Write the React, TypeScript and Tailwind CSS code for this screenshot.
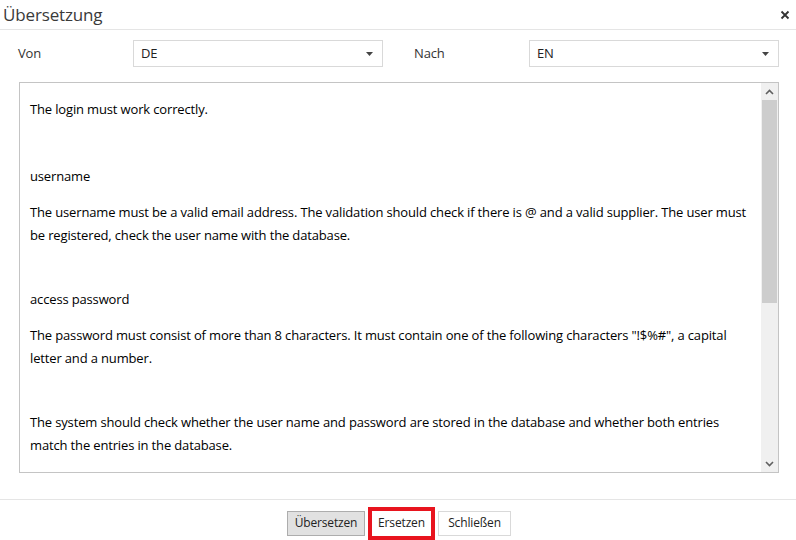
import React from "react";

function Select({ value }: { value: string }) {
  return (
    <div className="flex h-[27px] w-[250px] items-center justify-between border border-[#d9d9d9] bg-white pl-[7px] pr-[9px] text-[13px] text-[#222]">
      <span>{value}</span>
      <svg width="7" height="4" viewBox="0 0 7 4">
        <path d="M0 0h7L3.5 4z" fill="#444" />
      </svg>
    </div>
  );
}

export default function App() {
  return (
    <div
      className="flex h-[540px] w-[796px] flex-col bg-white text-[#222] tracking-[-0.15px]"
      style={{ fontFamily: '"Open Sans", "Noto Sans", sans-serif' }}
    >
      <div className="flex h-[30px] items-center justify-between border-b border-[#e5e5e5] pl-[3px] pr-[6px]">
        <span className="text-[17px] text-[#3a3a3a]">Übersetzung</span>
        <svg width="10" height="10" viewBox="0 0 10 10">
          <path d="M1.5 1.5L8.5 8.5M8.5 1.5L1.5 8.5" stroke="#333" strokeWidth="1.8" />
        </svg>
      </div>

      <div className="mt-[10px] flex items-center">
        <span className="ml-[18px] w-[115px] text-[13px] text-[#333]">Von</span>
        <Select value="DE" />
        <span className="ml-[31px] w-[115px] text-[13px] text-[#333]">Nach</span>
        <Select value="EN" />
      </div>

      <div className="ml-[19px] mt-[15px] flex h-[391px] w-[760px] border border-[#c4c4c4]">
        <div className="flex-1 pl-[10px] pr-[10px] pt-[15px] text-[13px] leading-[23px] text-black">
          <p>The login must work correctly.</p>
          <p className="mt-[44px]">username</p>
          <p className="mt-[13px]">
            The username must be a valid email address. The validation should check if there is @ and a valid supplier. The user must be registered, check the user name with the database.
          </p>
          <p className="mt-[41px]">access password</p>
          <p className="mt-[13px]">
            The password must consist of more than 8 characters. It must contain one of the following characters "!$%#", a capital letter and a number.
          </p>
          <p className="mt-[41px]">
            The system should check whether the user name and password are stored in the database and whether both entries match the entries in the database.
          </p>
        </div>
        <div className="flex w-[17px] flex-col bg-[#f0f0f0]">
          <div className="flex h-[17px] items-center justify-center">
            <svg width="9" height="6" viewBox="0 0 9 6">
              <path d="M1 5L4.5 1.5L8 5" stroke="#606060" strokeWidth="1.6" fill="none" />
            </svg>
          </div>
          <div className="mx-[1px] h-[203px] bg-[#cdcdcd]" />
          <div className="flex-1" />
          <div className="flex h-[17px] items-center justify-center">
            <svg width="9" height="6" viewBox="0 0 9 6">
              <path d="M1 1L4.5 4.5L8 1" stroke="#606060" strokeWidth="1.6" fill="none" />
            </svg>
          </div>
        </div>
      </div>

      <div className="mt-[26px] border-t border-[#e5e5e5]" />

      <div className="flex flex-1 items-center justify-center gap-[3px] pt-[6px] pl-[2px]">
        <button className="h-[25px] w-[78px] border border-[#adadad] bg-[#e1e1e1] text-[12px] text-[#222]">
          Übersetzen
        </button>
        <div className="flex h-[33px] w-[67px] border-[4px] border-[#e8141e]">
          <button className="flex-1 bg-white text-[12px] text-[#222]">Ersetzen</button>
        </div>
        <button className="h-[25px] w-[73px] border border-[#d9d9d9] bg-white text-[12px] text-[#222]">
          Schließen
        </button>
      </div>
    </div>
  );
}
